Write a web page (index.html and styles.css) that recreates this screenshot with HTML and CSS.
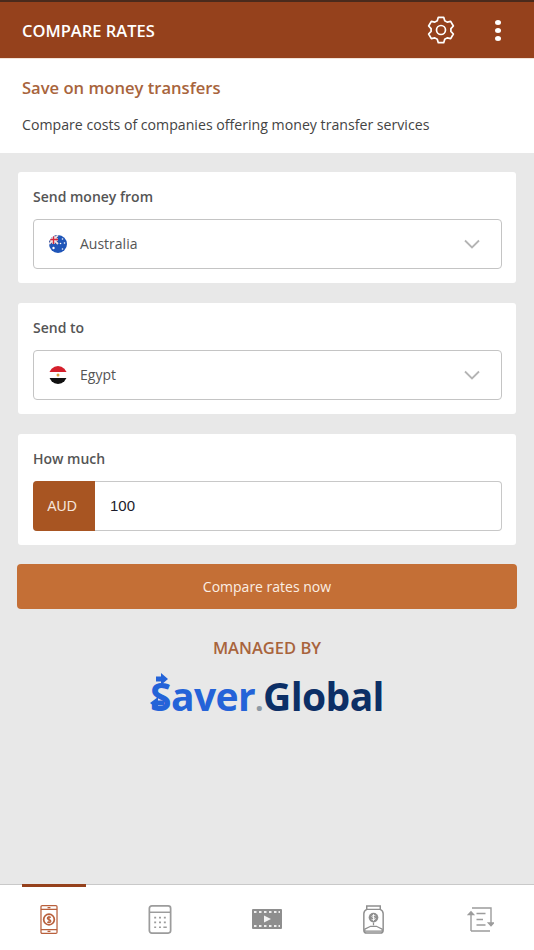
FILE: index.html
```html
<!DOCTYPE html>
<html lang="en">
<head>
    <meta charset="UTF-8">
    <meta name="viewport" content="width=device-width, initial-scale=1.0">
    <title>Compare Rates</title>
    <link rel="stylesheet" href="styles.css">
</head>
<body>
    <div class="app">
        <div class="header">
            <div class="header-title">COMPARE RATES</div>
            <svg class="gear" width="28" height="28" viewBox="0 0 28 28" fill="none" stroke="#fff" stroke-width="1.7" stroke-linejoin="round">
                <path d="M11.3 1.3H16.7L17.75 4.73L20.16 6.12L23.66 5.3L26.36 9.98L23.9 12.61V15.39L26.36 18.02L23.66 22.7L20.16 21.88L17.75 23.27L16.7 26.7H11.3L10.25 23.27L7.84 21.88L4.34 22.7L1.64 18.02L4.1 15.39V12.61L1.64 9.98L4.34 5.3L7.84 6.12L10.25 4.73Z"/>
                <circle cx="14" cy="14" r="4.5"/>
            </svg>
            <div class="dots"><span></span><span></span><span></span></div>
        </div>

        <div class="intro">
            <h1>Save on money transfers</h1>
            <p>Compare costs of companies offering money transfer services</p>
        </div>

        <div class="content">
            <div class="card">
                <div class="card-label">Send money from</div>
                <div class="select">
                    <svg class="flag" width="18" height="18" viewBox="0 0 18 18">
                        <defs><clipPath id="flagAu"><circle cx="9" cy="9" r="9"/></clipPath></defs>
                        <g clip-path="url(#flagAu)">
                            <rect width="18" height="18" fill="#1f55b8"/>
                            <rect width="9" height="9" fill="#33478f"/>
                            <path d="M0 0l9 9M9 0L0 9" stroke="#f3e6e6" stroke-width="1.8"/>
                            <path d="M4.5 0v9M0 4.5h9" stroke="#f3e6e6" stroke-width="2.6"/>
                            <path d="M4.5 0v9M0 4.5h9" stroke="#d8283c" stroke-width="1.3"/>
                            <circle cx="4.5" cy="13" r="1.2" fill="#fff"/>
                            <circle cx="13.5" cy="4" r=".8" fill="#fff"/>
                            <circle cx="11.5" cy="8.5" r=".8" fill="#fff"/>
                            <circle cx="15.5" cy="8" r=".8" fill="#fff"/>
                            <circle cx="13.5" cy="14" r=".8" fill="#fff"/>
                        </g>
                    </svg>
                    <span class="select-text">Australia</span>
                    <svg class="chevron" width="16" height="10" viewBox="0 0 16 10" fill="none" stroke="#b4b4b4" stroke-width="1.8"><path d="M1 1.5l7 7 7-7"/></svg>
                </div>
            </div>

            <div class="card">
                <div class="card-label">Send to</div>
                <div class="select">
                    <svg class="flag" width="18" height="18" viewBox="0 0 18 18">
                        <defs><clipPath id="flagEg"><circle cx="9" cy="9" r="9"/></clipPath></defs>
                        <g clip-path="url(#flagEg)">
                            <rect width="18" height="6" fill="#d5202c"/>
                            <rect y="6" width="18" height="6" fill="#fff"/>
                            <rect y="12" width="18" height="6" fill="#111"/>
                            <circle cx="9" cy="9" r="1.5" fill="#d9a441"/>
                        </g>
                    </svg>
                    <span class="select-text">Egypt</span>
                    <svg class="chevron" width="16" height="10" viewBox="0 0 16 10" fill="none" stroke="#b4b4b4" stroke-width="1.8"><path d="M1 1.5l7 7 7-7"/></svg>
                </div>
            </div>

            <div class="card">
                <div class="card-label">How much</div>
                <div class="amount">
                    <div class="currency">AUD</div>
                    <div class="amount-value">100</div>
                </div>
            </div>

            <div class="compare-btn">Compare rates now</div>

            <div class="managed">MANAGED BY</div>
            <div class="logo">
                <span class="logo-saver"><span class="logo-s">S<svg class="logo-arrows" width="22" height="36" viewBox="0 0 22 36" fill="#2463d8"><path d="M12 0l7 6-7 6V8.500H7v-5h5z"/><path d="M9 24l-8 6 8 6v-3.500h6v-5H9z"/></svg></span>aver</span><span class="logo-dot">.</span><span class="logo-global">Global</span>
            </div>
        </div>

        <div class="tabbar">
            <div class="tab active">
                <svg class="tab-phone" width="18" height="29" viewBox="0 0 18 30" fill="none" stroke="#b9603c" stroke-width="1.3">
                    <rect x=".7" y=".7" width="16.6" height="28.6" rx="1.2"/>
                    <path d="M.7 4.500h16.6M.7 25.500h16.6M7.500 2.600h3M7.500 27.400h3"/>
                    <circle cx="9" cy="15" r="5.500" stroke-width="1.8"/>
                    <path d="M11 12.800c-1.500-1-3.700-.6-3.700.9 0 2 3.600 1 3.600 3 0 1.400-2.300 1.700-3.800.8M9 11v8"/>
                </svg>
            </div>
            <div class="tab">
                <svg width="24" height="29" viewBox="0 0 24 30" fill="none" stroke="#9c9c9c">
                    <rect x="1" y="1" width="22" height="28" rx="2.500" stroke-width="1.8"/>
                    <path d="M1 7.500h22" stroke-width="1.5"/>
                    <path d="M6 13h2M11 13h2M16 13h2M6 18h2M11 18h2M16 18h2M6 23h2M11 23h2M15.500 23h3.500" stroke-width="1.7"/>
                </svg>
            </div>
            <div class="tab">
                <svg class="tab-film" width="30" height="20" viewBox="0 0 30 20">
                    <rect width="30" height="20" rx="1" fill="#8e8e8e"/>
                    <path d="M2 2h2.500v2H2zM7 2h2.500v2H7zM12 2h2.500v2H12zM17 2h2.500v2H17zM22 2h2.500v2H22zM26.500 2H28v2h-1.500zM2 16h2.500v2H2zM7 16h2.500v2H7zM12 16h2.500v2H12zM17 16h2.500v2H17zM22 16h2.500v2H22zM26.500 16H28v2h-1.500z" fill="#eee"/>
                    <path d="M12 6.500l7 3.500-7 3.500z" fill="#f4f4f4"/>
                </svg>
            </div>
            <div class="tab">
                <svg width="23" height="29" viewBox="0 0 22 30" fill="none" stroke="#8f8f8f" stroke-width="1.5">
                    <path d="M4 1h14v3.500H4z"/>
                    <path d="M4 4.500C2 5.500 1 7 1 9v17c0 2 1 3 3 3h14c2 0 3-1 3-3V9c0-2-1-3.500-3-4.500"/>
                    <circle cx="11" cy="13" r="5" fill="#8f8f8f" stroke="none"/>
                    <path d="M13 11.200c-1.200-.8-3.600-.7-3.600.7 0 1.700 3.400.6 3.400 2.300 0 1.200-2.400 1.300-3.800.6M11 9.500v7" stroke="#fff" stroke-width=".9"/>
                    <path d="M11 18v3M2 25l6-3h6l6 3v2H2z" stroke-width="1.3"/>
                </svg>
            </div>
            <div class="tab">
                <svg class="tab-list" width="27" height="25" viewBox="0 0 27 25" fill="none" stroke="#9c9c9c" stroke-width="1.4">
                    <path d="M4 24h19M4 24V7M5 1h19v15"/>
                    <path d="M1.500 7.500L4 4.800l2.500 2.700z" fill="#9c9c9c"/>
                    <path d="M21.500 16l2.500 2.700 2.500-2.700z" fill="#9c9c9c"/>
                    <path d="M9.500 6.500h9M9.500 12.500h6.500M9.500 18h9" stroke-width="1.500"/>
                </svg>
            </div>
        </div>
    </div>
</body>
</html>
```

FILE: styles.css
```css
body {
    font-family: 'Open Sans', 'Noto Sans', sans-serif;
    margin: 0;
    background-color: #e8e8e8;
    color: #444;
}

.app {
    height: 950px;
    display: flex;
    flex-direction: column;
    overflow: hidden;
}

.header {
    height: 56px;
    flex: none;
    display: flex;
    align-items: center;
    background-color: #95411c;
    border-top: 2px solid #4a2a1c;
    color: white;
    padding: 0 33px 0 22px;
}

.header-title {
    flex: 1;
    font-size: 16.5px;
    font-weight: 600;
}

.gear {
    margin-right: 40px;
}

.dots {
    display: flex;
    flex-direction: column;
    gap: 3px;
}

.dots span {
    width: 6px;
    height: 5px;
    border-radius: 50%;
    background-color: white;
}

.intro {
    height: 95px;
    flex: none;
    box-sizing: border-box;
    background-color: white;
    border-top: 1px solid #f3e3d8;
    padding: 18px 22px 0;
}

.intro h1 {
    margin: 0;
    font-size: 16.6px;
    line-height: 22px;
    font-weight: 600;
    color: #a8643c;
}

.intro p {
    margin: 17px 0 0 0;
    font-size: 14.15px;
    line-height: 18px;
    color: #444;
}

.content {
    flex: 1;
    padding: 19px 17px 0;
}

.card {
    height: 111px;
    box-sizing: border-box;
    margin: 0 1px 20px;
    padding: 16px 14px 0 15px;
    background-color: white;
    border-radius: 3px;
}

.card-label {
    font-size: 14px;
    line-height: 18px;
    font-weight: 600;
    color: #555;
    margin-bottom: 13px;
}

.select {
    height: 50px;
    box-sizing: border-box;
    display: flex;
    align-items: center;
    padding: 0 21px 0 15px;
    border: 1px solid #c4c4c4;
    border-radius: 4px;
}

.flag {
    margin-right: 13px;
}

.select-text {
    flex: 1;
    font-size: 14px;
    color: #555;
    padding-bottom: 1px;
}

.amount {
    height: 50px;
    box-sizing: border-box;
    display: flex;
    border: 1px solid #c8c8c8;
    border-left: none;
    border-radius: 4px;
}

.currency {
    width: 58px;
    padding-right: 4px;
    margin: -1px 0;
    display: flex;
    align-items: center;
    justify-content: center;
    background-color: #a85522;
    color: #f5e6dc;
    border-radius: 4px 0 0 4px;
    font-family: 'Liberation Sans', sans-serif;
    font-size: 14px;
}

.amount-value {
    display: flex;
    align-items: center;
    padding: 0 0 2px 15px;
    font-family: 'Liberation Sans', sans-serif;
    font-size: 15px;
    color: #1c1c2c;
}

.compare-btn {
    height: 45px;
    margin-top: -1px;
    display: flex;
    align-items: center;
    justify-content: center;
    background-color: #c46f36;
    border-radius: 4px;
    color: #fbeee4;
    font-size: 14px;
}

.managed {
    margin-top: 29px;
    text-align: center;
    font-size: 16.5px;
    line-height: 20px;
    font-weight: 600;
    color: #a8643c;
}

.logo {
    margin-top: 17px;
    text-align: center;
    font-size: 39px;
    line-height: 42px;
    font-weight: 700;
    letter-spacing: -0.6px;
}

.logo-saver {
    color: #2463d8;
}

.logo-s {
    position: relative;
}

.logo-arrows {
    position: absolute;
    left: -1px;
    top: 4px;
}

.logo-dot {
    color: #8e9aa5;
    font-size: 30px;
}

.logo-global {
    color: #0c2f66;
}

.tabbar {
    height: 65px;
    flex: none;
    display: flex;
    background-color: white;
    border-top: 1px solid #c9c9c9;
}

.tab {
    flex: 1;
    position: relative;
    display: flex;
    justify-content: center;
    align-items: flex-start;
    padding-top: 20px;
}

.tab.active::before {
    content: "";
    position: absolute;
    top: -1px;
    left: 22px;
    width: 64px;
    height: 3px;
    background-color: #95411c;
}

.tab-phone {
    margin-left: -9px;
}

.tab-film {
    margin-top: 4px;
}

.tab-list {
    margin-top: 2px;
}
```
